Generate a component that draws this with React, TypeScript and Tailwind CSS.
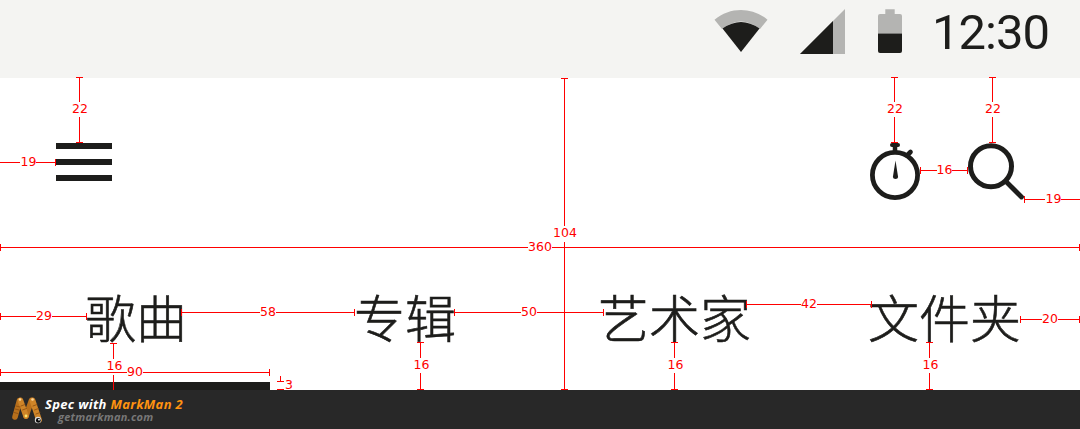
import React from "react";

type DimProps = { at: number; from: number; to: number; gap: [number, number]; label: string; tx: number; ty: number; startCap?: boolean; endCap?: boolean };

function HDim({ at, from, to, gap, label, tx, ty, startCap = true, endCap = true }: DimProps) {
  return (
    <g>
      <path d={`M${from} ${at + 0.5}H${gap[0]}M${gap[1]} ${at + 0.5}H${to + 1}`} />
      {startCap && <path d={`M${from + 0.5} ${at - 3}v7`} />}
      {endCap && <path d={`M${to + 0.5} ${at - 3}v7`} />}
      <text x={tx} y={ty}>{label}</text>
    </g>
  );
}

function VDim({ at, from, to, gap, label, tx, ty, startCap = true, endCap = true }: DimProps) {
  return (
    <g>
      <path d={`M${at + 0.5} ${from}V${gap[0]}M${at + 0.5} ${gap[1]}V${to + 1}`} />
      {startCap && <path d={`M${at - 3} ${from + 0.5}h7`} />}
      {endCap && <path d={`M${at - 3} ${to + 0.5}h7`} />}
      <text x={tx} y={ty}>{label}</text>
    </g>
  );
}

function Dimensions() {
  return (
    <svg
      className="pointer-events-none absolute left-0 top-0 h-[429px] w-[1080px] [&_path]:stroke-[#f00] [&_text]:fill-[#f00] [&_text]:font-['DejaVu_Sans',sans-serif] [&_text]:text-[12.5px]"
      viewBox="0 0 1080 429"
      fill="none"
    >
      <VDim at={79} from={77} to={142} gap={[102, 117]} label="22" tx={72} ty={113} />
      <VDim at={894} from={77} to={142} gap={[102, 117]} label="22" tx={887} ty={113} />
      <VDim at={992} from={77} to={142} gap={[102, 117]} label="22" tx={985} ty={113} />
      <HDim at={162} from={0} to={55} gap={[20, 36]} label="19" tx={20.5} ty={166} startCap={false} />
      <HDim at={170} from={920} to={967} gap={[937, 952]} label="16" tx={936.5} ty={174} />
      <HDim at={199} from={1024} to={1080} gap={[1045, 1061]} label="19" tx={1045.5} ty={203} endCap={false} />
      <HDim at={247} from={0} to={1079} gap={[528, 552]} label="360" tx={528} ty={251} />
      <VDim at={564} from={78} to={389} gap={[226, 242]} label="104" tx={553} ty={237} />
      <HDim at={316} from={0} to={86} gap={[36, 52]} label="29" tx={36} ty={320} />
      <HDim at={312} from={181} to={354} gap={[260, 276]} label="58" tx={260} ty={316} />
      <HDim at={312} from={454} to={603} gap={[521, 537]} label="50" tx={521} ty={316} />
      <HDim at={304} from={746} to={871} gap={[801, 817]} label="42" tx={801} ty={308} />
      <HDim at={319} from={1020} to={1079} gap={[1042, 1058]} label="20" tx={1042} ty={323} />
      <HDim at={372} from={0} to={269} gap={[127, 143]} label="90" tx={127} ty={376} />
      <VDim at={113} from={343} to={389} gap={[359, 375]} label="16" tx={106.5} ty={370} endCap={false} />
      <VDim at={420} from={342} to={389} gap={[358, 373]} label="16" tx={413.5} ty={369} />
      <VDim at={674} from={342} to={389} gap={[358, 373]} label="16" tx={667.5} ty={369} />
      <VDim at={929} from={342} to={389} gap={[358, 373]} label="16" tx={922.5} ty={369} />
      <path d="M280.5 376v5M277 381.5h7M277 389.5h7" />
      <text x="285" y="389">3</text>
    </svg>
  );
}

function WifiIcon() {
  return (
    <svg className="h-[44px] w-[54px]" viewBox="0 0 54 44">
      <path d="M.5 10.7C16-2.2 38-2.2 53.500 10.700L46 20Q27 5 8 20Z" fill="#b4b4b2" />
      <path d="M8.500 19.500Q27 6.500 45.500 19.500L27 43Z" fill="#1d1d1b" />
    </svg>
  );
}

function SignalIcon() {
  return (
    <svg className="h-[45px] w-[45px]" viewBox="0 0 45 45">
      <path d="M0 45L45 0V45Z" fill="#b4b4b2" />
      <path d="M0 45L33 12V45Z" fill="#1d1d1b" />
    </svg>
  );
}

function BatteryIcon() {
  return (
    <svg className="h-[44px] w-[24px]" viewBox="0 0 24 44">
      <path d="M7.300.3h9.400v4.700H22a2 2 0 0 1 2 2v17.500H0V7a2 2 0 0 1 2-2h5.300Z" fill="#b4b4b2" />
      <path d="M0 24.500h24V42a2 2 0 0 1-2 2H2a2 2 0 0 1-2-2Z" fill="#1d1d1b" />
    </svg>
  );
}

function StopwatchIcon() {
  return (
    <svg className="h-[58px] w-[50px]" viewBox="0 0 50 58" fill="none" stroke="#1d1d1b">
      <circle cx="25" cy="32" r="22.600" strokeWidth="4.800" />
      <path d="M22 2h6" strokeWidth="4" strokeLinecap="round" />
      <path d="M25 3v6" strokeWidth="4.500" />
      <path d="M37 12.500L40.500 9" strokeWidth="4.600" strokeLinecap="round" />
      <path d="M25.500 17.500L28.100 34q-.2 2-2.600 2T22.900 34Z" fill="#1d1d1b" stroke="none" />
    </svg>
  );
}

function SearchIcon() {
  return (
    <svg className="h-[58px] w-[58px]" viewBox="0 0 58 58" fill="none" stroke="#1d1d1b">
      <circle cx="23" cy="23.200" r="20.500" strokeWidth="5" />
      <path d="M38 38.500L53.500 54" strokeWidth="4.800" strokeLinecap="round" />
    </svg>
  );
}

function MarkManLogo() {
  return (
    <svg className="h-[31px] w-[34px]" viewBox="0 0 34 31" fill="none" strokeLinecap="round">
      <path d="M4 22L8.500 5.500" stroke="#b8701c" strokeWidth="5.600" />
      <path d="M15 21L20.500 5.500" stroke="#b8701c" strokeWidth="5.600" />
      <path d="M9.500 5.500L15 21" stroke="#cf8528" strokeWidth="5.600" />
      <path d="M21.500 5.500L28 25" stroke="#cf8528" strokeWidth="5.800" />
      <path d="M5 11l4 1M4 14l4 1M3 17.500l4 1M10 11l4-1.500M11.500 15l4-1.500M22 11l4-1.500M23.500 15l4-1.500M25 19l4-1.500" stroke="#8a4d10" strokeWidth=".8" />
      <circle cx="9" cy="4.500" r="1.300" fill="#ffd79a" />
      <circle cx="21.500" cy="4.500" r="1.300" fill="#ffd79a" />
      <circle cx="15" cy="21" r="1.400" fill="#ffe66c" />
      <circle cx="27" cy="25" r="3.200" fill="#ddd" />
      <circle cx="27.300" cy="25.400" r="2.400" fill="#080808" />
      <circle cx="28" cy="24.700" r=".9" fill="#fff" />
    </svg>
  );
}

export default function App() {
  return (
    <div className="relative flex h-[429px] w-[1080px] flex-col overflow-hidden bg-white text-[#1d1d1b]">
      <header className="flex h-[78px] shrink-0 items-start bg-[#f4f4f2] pl-[714px] pt-[9px]">
        <WifiIcon />
        <div className="ml-8"><SignalIcon /></div>
        <div className="ml-[33px]"><BatteryIcon /></div>
        <span className="ml-[30px] whitespace-nowrap font-['Roboto',sans-serif] text-[49px] leading-[48px] tracking-[-1px]">12:30</span>
      </header>

      <div className="flex h-[169px] shrink-0 items-start pl-14 pr-[54px] pt-[65px]">
        <div className="flex w-14 flex-col gap-[10px]">
          <div className="h-1.5 bg-[#1d1d1b]" />
          <div className="h-1.5 bg-[#1d1d1b]" />
          <div className="h-1.5 bg-[#1d1d1b]" />
        </div>
        <div className="ml-auto flex gap-12">
          <StopwatchIcon />
          <SearchIcon />
        </div>
      </div>

      <nav className="flex h-[135px] shrink-0 items-start whitespace-nowrap pl-[85px] pt-[44px] font-['Noto_Sans_CJK_SC',sans-serif] text-[51px] font-light leading-[50px] [-webkit-text-stroke:0.6px_#1d1d1b]">
        <span className="w-[269px]">歌曲</span>
        <span className="w-[244px]">专辑</span>
        <span className="w-[270px]">艺术家</span>
        <span>文件夹</span>
      </nav>
      <div className="h-2 w-[270px] shrink-0 bg-[#1d1d1b]" />

      <footer className="flex h-[39px] shrink-0 items-start bg-[#282828] pl-[11px] pt-[5px] font-['Open_Sans',sans-serif] italic">
        <MarkManLogo />
        <div className="whitespace-nowrap">
          <p className="text-[13px] font-bold leading-[18px] tracking-[0.33px] text-white">Spec with <span className="text-[#ff9310]">MarkMan 2</span></p>
          <p className="pl-[13px] text-[11px] font-bold leading-[8px] tracking-[0.25px] text-[#777]">getmarkman.com</p>
        </div>
      </footer>
      <Dimensions />
    </div>
  );
}
